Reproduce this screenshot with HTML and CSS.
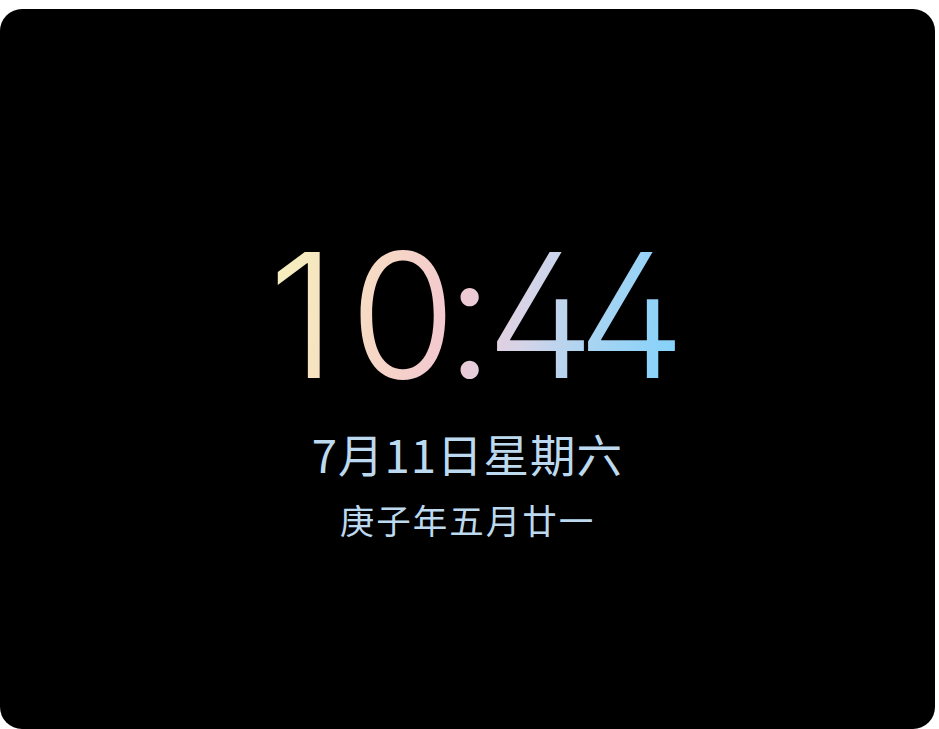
FILE: index.html
```html
<!DOCTYPE html>
<html lang="zh">
<head>
<meta charset="utf-8">
<title>锁屏时钟</title>
<link rel="stylesheet" href="styles.css">
</head>
<body>
<main class="screen">
  <div class="clock"><span class="hour-tens">1</span><span class="hour-ones">0</span>:<span class="min-tens">4</span>4</div>
  <div class="date">7月11日星期六</div>
  <div class="lunar">庚子年五月廿一</div>
</main>
</body>
</html>
```

FILE: styles.css
```css
html, body {
  margin: 0;
  padding: 0;
  background: #ffffff;
}
body {
  width: 939px;
  height: 729px;
  overflow: hidden;
}
.screen {
  box-sizing: border-box;
  margin-top: 9px;
  width: 935px;
  height: 720px;
  background: #000000;
  border-radius: 22px;
  display: flex;
  flex-direction: column;
  align-items: center;
  padding-top: 220px;
}
.clock {
  margin-left: 11px;
  font-family: Inter, "Liberation Sans", sans-serif;
  font-weight: 280;
  font-size: 173px;
  line-height: 1;
  font-feature-settings: "cv02" 1;
  letter-spacing: -8px;
  background: linear-gradient(100deg, #f6f2bc 0%, #f6d6c6 30%, #f2c8d0 45%, #d6d4e8 62%, #a8d4f2 78%, #80d2fc 100%);
  -webkit-background-clip: text;
  background-clip: text;
  color: transparent;
}
.hour-tens {
  margin-right: 21px;
}
.hour-ones {
  margin-right: -3px;
}
.min-tens {
  margin-right: -10px;
}
.date {
  margin-top: 24px;
  font-family: "Noto Sans CJK SC", "Noto Sans", sans-serif;
  font-size: 45.5px;
  line-height: 1.2;
  color: #bcd9ef;
  letter-spacing: 1px;
}
.lunar {
  margin-top: 18px;
  font-family: "Noto Sans CJK SC", "Noto Sans", sans-serif;
  font-size: 34.5px;
  line-height: 1.2;
  color: #bcd9ef;
  letter-spacing: 2px;
}
```
